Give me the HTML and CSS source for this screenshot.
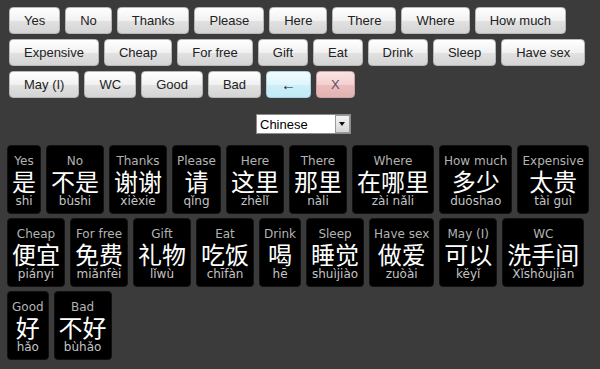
FILE: index.html
```html
<!DOCTYPE html>
<html lang="en">
<head>
    <meta charset="UTF-8">
    <meta name="viewport" content="width=device-width, initial-scale=1.0">
    <title>Phrases</title>
    <link rel="stylesheet" href="styles.css">
</head>
<body>
    <div class="keys">
        <button class="key">Yes</button>
        <button class="key">No</button>
        <button class="key">Thanks</button>
        <button class="key">Please</button>
        <button class="key">Here</button>
        <button class="key">There</button>
        <button class="key">Where</button>
        <button class="key">How much</button>
        <button class="key">Expensive</button>
        <button class="key">Cheap</button>
        <button class="key">For free</button>
        <button class="key">Gift</button>
        <button class="key">Eat</button>
        <button class="key">Drink</button>
        <button class="key">Sleep</button>
        <button class="key">Have sex</button>
        <button class="key">May (I)</button>
        <button class="key">WC</button>
        <button class="key">Good</button>
        <button class="key">Bad</button>
        <button class="key back">&larr;</button>
        <button class="key clear">X</button>
    </div>

    <div class="lang">
        <div class="select-wrap">
            <select class="select">
                <option>Chinese</option>
            </select>
            <span class="arrow"></span>
        </div>
    </div>

    <div class="words">
        <div class="word"><span class="en">Yes</span><span class="zh">是</span><span class="py">shi</span></div>
        <div class="word"><span class="en">No</span><span class="zh">不是</span><span class="py">bùshi</span></div>
        <div class="word"><span class="en">Thanks</span><span class="zh">谢谢</span><span class="py">xièxie</span></div>
        <div class="word"><span class="en">Please</span><span class="zh">请</span><span class="py">qǐng</span></div>
        <div class="word"><span class="en">Here</span><span class="zh">这里</span><span class="py">zhèlǐ</span></div>
        <div class="word"><span class="en">There</span><span class="zh">那里</span><span class="py">nàli</span></div>
        <div class="word"><span class="en">Where</span><span class="zh">在哪里</span><span class="py">zài nǎli</span></div>
        <div class="word"><span class="en">How much</span><span class="zh">多少</span><span class="py">duōshao</span></div>
        <div class="word"><span class="en">Expensive</span><span class="zh">太贵</span><span class="py">tài guì</span></div>
        <div class="word"><span class="en">Cheap</span><span class="zh">便宜</span><span class="py">piányi</span></div>
        <div class="word"><span class="en">For free</span><span class="zh">免费</span><span class="py">miǎnfèi</span></div>
        <div class="word"><span class="en">Gift</span><span class="zh">礼物</span><span class="py">lǐwù</span></div>
        <div class="word"><span class="en">Eat</span><span class="zh">吃饭</span><span class="py">chīfàn</span></div>
        <div class="word"><span class="en">Drink</span><span class="zh">喝</span><span class="py">hē</span></div>
        <div class="word"><span class="en">Sleep</span><span class="zh">睡觉</span><span class="py">shuìjiào</span></div>
        <div class="word"><span class="en">Have sex</span><span class="zh">做爱</span><span class="py">zuòài</span></div>
        <div class="word"><span class="en">May (I)</span><span class="zh">可以</span><span class="py">kěyǐ</span></div>
        <div class="word"><span class="en">WC</span><span class="zh">洗手间</span><span class="py">Xǐshǒujiān</span></div>
        <div class="word"><span class="en">Good</span><span class="zh">好</span><span class="py">hǎo</span></div>
        <div class="word"><span class="en">Bad</span><span class="zh">不好</span><span class="py">bùhǎo</span></div>
    </div>
</body>
</html>
```

FILE: styles.css
```css
body{
    margin: 0;
    background-color: #3b3b3b;
    font-family: "Liberation Sans", Arial, sans-serif;
}

/* top keyboard */
.keys{
    display: flex;
    flex-wrap: wrap;
    gap: 5px;
    padding: 7px 6px 0 9px;
}
.key{
    font-family: "Liberation Sans", Arial, sans-serif;
    font-size: 13px;
    line-height: 15px;
    color: #222;
    padding: 5px 14px;
    border: 1px solid #b8b8b8;
    border-radius: 4px;
    background: linear-gradient(#ffffff, #f1f1f1 50%, #e2e2e2 51%, #d4d4d4);
}
.back{
    font-size: 15px;
    background: linear-gradient(#f0fcff, #dff6fd 50%, #cdeffa 51%, #c2eaf7);
    border-color: #a9cfdc;
}
.clear{
    color: #5a4d63;
    background: linear-gradient(#fbe3e3, #f3d0d0 50%, #ebbebe 51%, #e3b2b2);
    border-color: #cfa3a3;
}

/* language picker */
.lang{
    text-align: center;
    padding-top: 16px;
}
.select-wrap{
    display: inline-block;
    position: relative;
    margin-left: 7px;
}
.select{
    appearance: none;
    -webkit-appearance: none;
    width: 95px;
    height: 20px;
    padding: 0 0 0 3px;
    border: 1px solid #8c8c8c;
    border-radius: 0;
    background: #fff;
    color: #000;
    font-family: "Liberation Sans", Arial, sans-serif;
    font-size: 13px;
    display: block;
}
.arrow{
    position: absolute;
    right: 1px;
    top: 1px;
    width: 13px;
    height: 16px;
    border: 1px solid #9a9a9a;
    background: linear-gradient(#f4f4f4, #d6d6d6);
    pointer-events: none;
}
.arrow::after{
    content: "";
    position: absolute;
    left: 3px;
    top: 6px;
    border-left: 3.5px solid transparent;
    border-right: 3.5px solid transparent;
    border-top: 4px solid #111;
}

/* word cards */
.words{
    display: flex;
    flex-wrap: wrap;
    gap: 4px 5px;
    padding: 11px 8px 0 7px;
}
.word{
    display: flex;
    flex-direction: column;
    align-items: center;
    padding: 8px 4px 5px;
    background: #000;
    border: 1px solid #111;
    border-radius: 4px;
    font-family: "DejaVu Sans", Verdana, sans-serif;
    font-size: 12px;
}
.en{
    color: #b3b3b3;
    line-height: 14px;
}
.zh{
    color: #fff;
    font-family: "Noto Sans CJK SC", sans-serif;
    font-size: 24px;
    line-height: 26px;
}
.py{
    color: #c4c4c4;
    line-height: 14px;
}
```
